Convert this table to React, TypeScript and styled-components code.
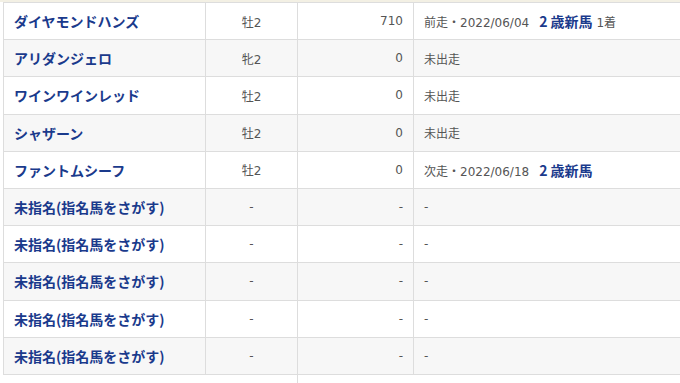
import React from 'react'
import styled, { createGlobalStyle } from 'styled-components'

const Global = createGlobalStyle`
	html, body {
		margin: 0;
		padding: 0;
		background: #fff;
		overflow: hidden;
	}
	body {
		font-family: "DejaVu Sans", "Noto Sans CJK JP", sans-serif;
		color: #555;
	}
`

const TopBand = styled.div`
	height: 2px;
	background: #f3f0e4;
`

const Table = styled.table`
	margin-left: 3px;
	width: 677px;
	border-collapse: collapse;
	table-layout: fixed;
	border-top: 1px solid #ddd;
`

const Row = styled.tr<{ $alt: boolean }>`
	height: 37.2px;
	background: ${p => p.$alt ? '#f7f7f7' : '#fff'};
	td:last-child {
		border-right: none;
	}
`

const Cell = styled.td<{ $align?: string; $w?: number }>`
	border: 1px solid #ddd;
	border-top: none;
	padding: 0 10px;
	text-align: ${p => p.$align || 'left'};
	width: ${p => p.$w ? `${p.$w}px` : 'auto'};
	font-size: 12px;
	color: #555;
	white-space: nowrap;
	overflow: hidden;
	box-sizing: border-box;
`

const Name = styled.a`
	color: #1a3a8c;
	font-family: "Noto Sans CJK JP", sans-serif;
	font-weight: bold;
	font-size: 14px;
	text-decoration: none;
`

const Race = styled.a`
	color: #1a3a8c;
	font-family: "Noto Sans CJK JP", sans-serif;
	font-weight: bold;
	font-size: 14px;
	margin-left: 10px;
	text-decoration: none;
`

const Tail = styled.div`
	margin-left: 297px;
	height: 12px;
	border-left: 1px solid #ddd;
`

type Horse = { name: string; sex: string; prize: string; race: React.ReactNode }

const horses: Horse[] = [
	{ name: 'ダイヤモンドハンズ', sex: '牡2', prize: '710', race: <>前走・2022/06/04<Race>2 歳新馬</Race> 1着</> },
	{ name: 'アリダンジェロ', sex: '牝2', prize: '0', race: '未出走' },
	{ name: 'ワインワインレッド', sex: '牡2', prize: '0', race: '未出走' },
	{ name: 'シャザーン', sex: '牡2', prize: '0', race: '未出走' },
	{ name: 'ファントムシーフ', sex: '牡2', prize: '0', race: <>次走・2022/06/18<Race>2 歳新馬</Race></> },
]

const empty = Array.from({ length: 5 }, () => ({ name: '未指名(指名馬をさがす)', sex: '-', prize: '-', race: '-' }))

export default function App() {
	const rows = [...horses, ...empty]
	return (
		<>
			<Global />
			<TopBand />
			<Table>
				<tbody>
					{rows.map((h, i) => (
						<Row key={i} $alt={i % 2 === 1}>
							<Cell $w={202}><Name href="#">{h.name}</Name></Cell>
							<Cell $w={92} $align="center">{h.sex}</Cell>
							<Cell $w={116} $align="right">{h.prize}</Cell>
							<Cell>{h.race}</Cell>
						</Row>
					))}
				</tbody>
			</Table>
			<Tail />
		</>
	)
}
